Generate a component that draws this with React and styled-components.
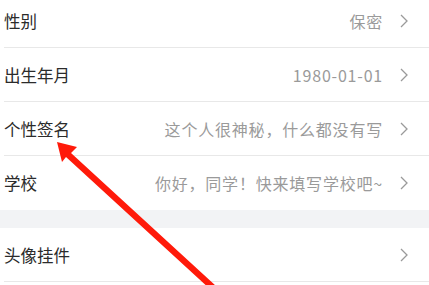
import React from 'react';
import styled, { createGlobalStyle } from 'styled-components';

const GlobalStyle = createGlobalStyle`
  html, body {
    margin: 0;
    padding: 0;
    background: #fff;
    overflow: hidden;
  }
  body {
    font-family: "Noto Sans CJK SC", "Noto Sans", sans-serif;
  }
`;

const Page = styled.div`
  position: relative;
  width: 429px;
  height: 285px;
  overflow: hidden;
  background: #fff;
`;

const List = styled.div`
  margin-top: -6px;
`;

const Group = styled.div`
  background: #fff;
`;

const Row = styled.div`
  display: flex;
  align-items: center;
  height: 53px;
  margin-left: 4px;
  padding-right: 21px;
  border-bottom: 1px solid #e8e8e8;
  ${p => p.$last && 'border-bottom-color: transparent;'}
`;

const Label = styled.span`
  flex: 1;
  font-size: 16.5px;
  color: #2b2b2b;
  white-space: nowrap;
`;

const Value = styled.span`
  font-size: 16px;
  color: #9a9a9a;
  white-space: nowrap;
  margin-right: 17px;
  letter-spacing: 0.8px;
`;

const Spacer = styled.div`
  height: 18px;
  background: #f2f3f5;
`;

const Chevron = () => (
  <svg width="8" height="14" viewBox="0 0 8 14">
    <path d="M1 1 L7 7 L1 13" fill="none" stroke="#9a9a9a" strokeWidth="1.3" />
  </svg>
);

const Overlay = styled.svg`
  position: absolute;
  left: 0;
  top: 0;
  pointer-events: none;
`;

const items = [
  { label: '性别', value: '保密' },
  { label: '出生年月', value: '1980-01-01' },
  { label: '个性签名', value: '这个人很神秘，什么都没有写' },
  { label: '学校', value: '你好，同学！快来填写学校吧~', last: true },
];

export default function App() {
  return (
    <Page>
      <GlobalStyle />
      <List>
        <Group>
          {items.map(it => (
            <Row key={it.label} $last={it.last}>
              <Label>{it.label}</Label>
              <Value>{it.value}</Value>
              <Chevron />
            </Row>
          ))}
        </Group>
        <Spacer />
        <Group>
          <Row>
            <Label>头像挂件</Label>
            <Chevron />
          </Row>
        </Group>
      </List>
      <Overlay width="429" height="285" viewBox="0 0 429 285">
        <polygon
          points="57,142 77,147 71,153 216,286 211,290 66,157 62,162"
          fill="#ff1a0a"
        />
      </Overlay>
    </Page>
  );
}
